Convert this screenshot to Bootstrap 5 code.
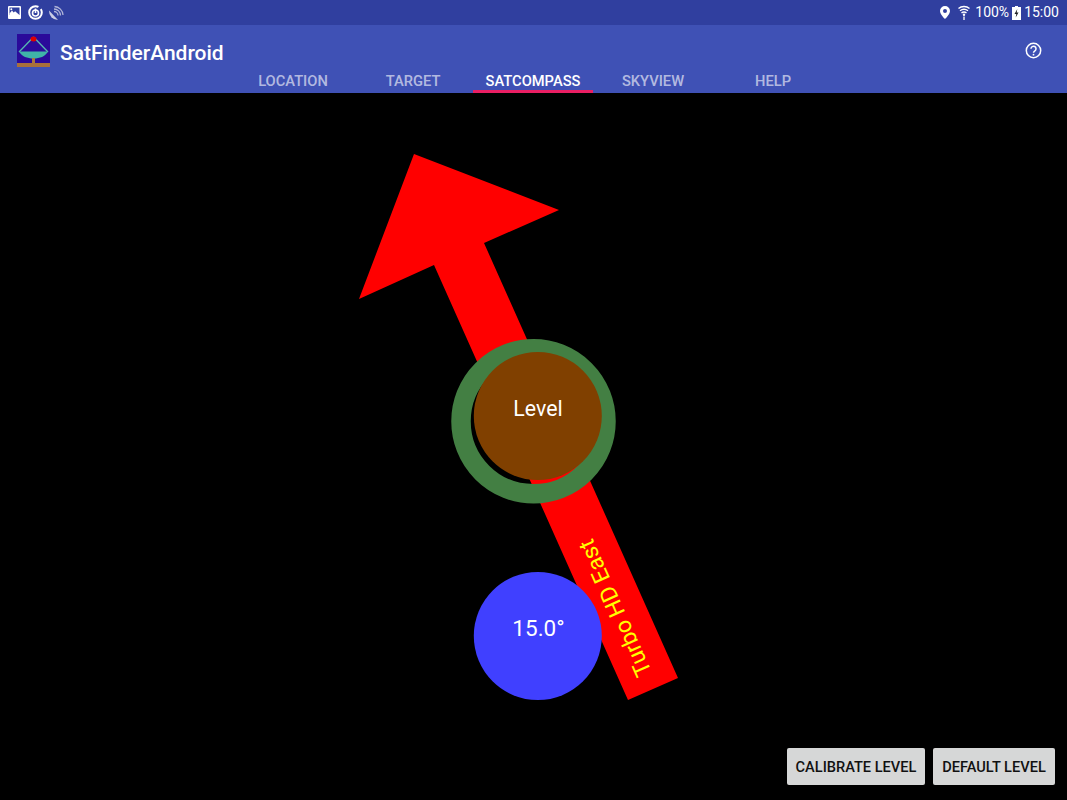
<!DOCTYPE html>
<html lang="en">
<head>
<meta charset="utf-8">
<title>SatFinderAndroid</title>
<link href="https://cdn.jsdelivr.net/npm/bootstrap@5.3.0/dist/css/bootstrap.min.css" rel="stylesheet">
<style>
html,body{height:100%;margin:0;background:#000;font-family:Roboto,"Liberation Sans",sans-serif;overflow:hidden}
.shell{width:1067px;height:800px}
.statusbar{height:25px;background:#303f9f;color:#fff;font-size:14px;padding:0 8px;flex:none}
.statusbar svg{display:block;flex:none}
.appbar{height:68px;background:#3f51b5;flex:none;color:#fff}
.titlerow{height:47px;padding-left:17px;padding-top:9px}
.apptitle{font-size:21px;font-weight:500;line-height:38px;margin-left:10px}
.helpicon{position:absolute;left:1025px;top:17px}
.tabstrip{margin-left:233px;height:21px}
.tabitem{width:120px;height:21px;font-size:14.700px;font-weight:500;line-height:16px;padding-top:1px;text-align:center;color:rgba(255,255,255,.62);text-decoration:none}
.tabitem.on{color:#fff;border-bottom:3px solid #e91e63}
.stage{background:#000;min-height:0}
.compass{position:absolute;left:0;top:0;width:1067px;height:707px}
.compass text{font-family:Roboto,"Liberation Sans",sans-serif}
.actions{padding:0 12px 15px 0;gap:8px;position:relative}
.actbtn{height:37px;background:#d6d7d7;color:#111;font-size:14.600px;font-weight:500;border:0;border-radius:2px;padding:3px 0 0;box-shadow:none}
.actbtn:hover{background:#d6d7d7;color:#111}
.btnw1{width:138px}.btnw2{width:122px}
.gap7{margin-left:7px}.gap5{margin-left:5px}.gap8{margin-left:8px}.gap3{margin-left:3px}
</style>
</head>
<body>
<div class="shell d-flex flex-column position-relative">
  <div class="statusbar d-flex align-items-center">
    <svg width="13" height="13" viewBox="0 0 13 13"><rect width="13" height="13" rx="1" fill="#fff"/><rect x="1.500" y="1.500" width="10" height="7.500" fill="#303f9f"/><path d="M1.500 7.500 4 4.500l1.700 2 1.400-1.200L11.500 9v1.500h-10z" fill="#fff"/><circle cx="3.300" cy="3.300" r="1" fill="#fff"/></svg>
    <svg class="gap7" width="15" height="15" viewBox="0 0 15 15"><circle cx="7.500" cy="7.500" r="6.300" fill="none" stroke="#fff" stroke-width="2" stroke-dasharray="32 3"/><circle cx="7.500" cy="8" r="3" fill="none" stroke="#fff" stroke-width="1.600"/><path d="M7.500 3.500v4.500" stroke="#fff" stroke-width="1.600"/></svg>
    <svg class="gap5" width="16" height="17" viewBox="0 0 16 17"><path d="M1 6.500A9 9 0 0 0 10 16Z" fill="#c9cce4"/><path d="M6 7.500A4 4 0 0 1 10 11.500M6 5A6.500 6.500 0 0 1 12.500 11.500M6.500 2.500A9 9 0 0 1 15 11" fill="none" stroke="#b0b5d8" stroke-width="1.300"/></svg>
    <div class="ms-auto d-flex align-items-center">
      <svg width="10" height="13" viewBox="0 0 10 13"><path d="M5 0a5 5 0 0 0-5 5c0 3.500 5 8 5 8s5-4.500 5-8a5 5 0 0 0-5-5zm0 7a2 2 0 1 1 0-4 2 2 0 0 1 0 4z" fill="#fff"/></svg>
      <svg class="gap8" width="12" height="15" viewBox="0 0 12 15"><path d="M.5 3.500C3.500.8 8.500.8 11.500 3.500M2 5.800C4.300 4 7.700 4 10 5.800M3.500 7.800C5 6.800 7 6.800 8.500 7.800" fill="none" stroke="#fff" stroke-width="1.400"/><circle cx="6" cy="9.800" r="1.200" fill="#fff"/><path d="M5 11.500h2V15H5z" fill="#b8bcd8"/></svg>
      <span class="gap5">100%</span>
      <svg class="gap3" width="9" height="14" viewBox="0 0 9 14"><path d="M3 0h3v1h3v13H0V1h3z" fill="#fff"/><path d="M5.300 3 2.500 8h1.800l-.6 3.500L6.500 6.500H4.700z" fill="#222"/></svg>
      <span class="gap3">15:00</span>
    </div>
  </div>
  <div class="appbar d-flex flex-column position-relative">
    <div class="titlerow d-flex align-items-start">
      <svg width="33" height="33" viewBox="0 0 33 33"><rect width="33" height="33" fill="#2a0a9a"/><path d="M16.500 3 2 18" stroke="#57b8b0" stroke-width="1.300"/><path d="M16.500 3 31 18" stroke="#57b8b0" stroke-width="1.300"/><path d="M2 17.500h29c-3 5-8 7-14.500 7S5 22.500 2 17.500z" fill="#3fb3a8"/><ellipse cx="16.500" cy="5" rx="3" ry="2.500" fill="#e00000"/><rect x="15" y="24" width="3" height="5" fill="#a8763e"/><rect y="29" width="33" height="4" fill="#a8703a"/></svg>
      <span class="apptitle">SatFinderAndroid</span>
    </div>
    <svg class="helpicon" width="17" height="17" viewBox="0 0 17 17"><circle cx="8.500" cy="8.500" r="7.200" fill="none" stroke="#fff" stroke-width="1.500"/><path d="M6 6.700a2.500 2.500 0 1 1 3.900 2.100c-.9.600-1.400 1-1.400 2" fill="none" stroke="#fff" stroke-width="1.500"/><circle cx="8.500" cy="12.700" r=".9" fill="#fff"/></svg>
    <nav class="tabstrip d-flex">
      <a class="tabitem" href="#">LOCATION</a>
      <a class="tabitem" href="#">TARGET</a>
      <a class="tabitem on" href="#">SATCOMPASS</a>
      <a class="tabitem" href="#">SKYVIEW</a>
      <a class="tabitem" href="#">HELP</a>
    </nav>
  </div>
  <main class="stage flex-grow-1 position-relative d-flex flex-column justify-content-end">
    <svg class="compass" viewBox="0 93 1067 707">
      <polygon points="414,154 559,210 484,243 678,678 628,700 434,265 359,299" fill="#f00"/>
      <circle cx="533.500" cy="421.300" r="72.500" fill="none" stroke="#437f43" stroke-width="19.500"/>
      <circle cx="537.800" cy="416" r="64" fill="#804000"/>
      <circle cx="537.800" cy="636" r="64" fill="#4040ff"/>
      <text x="538" y="415.500" font-size="21.300" fill="#fff" text-anchor="middle">Level</text>
      <text x="538.500" y="636" font-size="22.500" fill="#fff" text-anchor="middle">15.0°</text>
      <text transform="translate(652,672) rotate(-114)" font-size="23" fill="#ff0">Turbo HD East</text>
    </svg>
    <div class="actions d-flex justify-content-end">
      <button type="button" class="btn actbtn btnw1 text-nowrap">CALIBRATE LEVEL</button>
      <button type="button" class="btn actbtn btnw2 text-nowrap">DEFAULT LEVEL</button>
    </div>
  </main>
</div>
</body>
</html>
